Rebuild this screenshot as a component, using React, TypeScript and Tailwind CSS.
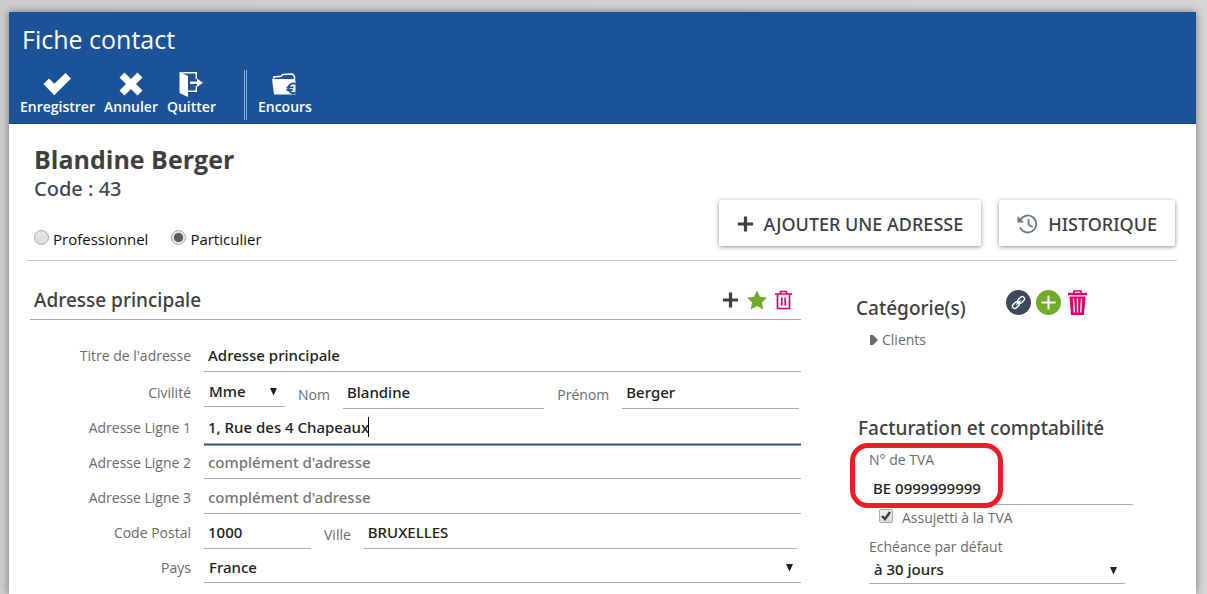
import type { ReactNode } from 'react';
import { clsx } from 'clsx';

const fieldClass = "w-full min-w-0 border-b border-[#a9a9a9] bg-transparent font-['Noto_Sans',sans-serif] text-[15px] font-medium text-[#212121] outline-none placeholder:text-[#757575] placeholder:opacity-100";
const inputClass = clsx(fieldClass, 'h-[35px] px-1 pt-0.5');
const headingClass = "font-['Noto_Sans',sans-serif] font-medium text-[#3f3f3f]";

function ToolButton({ label, children }: { label: string; children: ReactNode }) {
  return (
    <button type="button" className="flex flex-col items-center text-sm leading-5 font-semibold text-white">
      <span className="flex h-[27px] items-center">{children}</span>
      {label}
    </button>
  );
}

function Row({ label, id, className, children }: { label: string; id: string; className?: string; children: ReactNode }) {
  return (
    <div className="flex h-[35px] items-center gap-[13px]">
      <label htmlFor={id} className="w-[161px] shrink-0 pt-0.5 text-right text-sm text-[#6b6b6b]">{label}</label>
      <div className={clsx('flex min-w-0 flex-1 items-end gap-[13px]', className)}>{children}</div>
    </div>
  );
}

function InlineLabel({ id, children }: { id: string; children: ReactNode }) {
  return <label htmlFor={id} className="shrink-0 pb-1 text-sm leading-5 text-[#6b6b6b]">{children}</label>;
}

function Select({ id, value, className, compact }: { id: string; value: string; className?: string; compact?: boolean }) {
  return (
    <div className={clsx('relative self-start', className)}>
      <select id={id} className={clsx(fieldClass, 'block appearance-none pl-[5px]', compact ? 'h-[29px]' : 'h-[33px] pt-[3px]')} defaultValue={value}>
        <option>{value}</option>
      </select>
      <svg className="pointer-events-none absolute top-[3px] right-2 bottom-0 my-auto h-2 w-[7px]" viewBox="0 0 7 8" fill="#212121">
        <path d="M0 0h7L3.5 7.5z" />
      </svg>
    </div>
  );
}

function PlusIcon() {
  return (
    <svg width="17" height="18" viewBox="0 0 18 18" fill="none" stroke="#3f3f3f" strokeWidth="3.4">
      <path d="M9 1v16M1 9h16" />
    </svg>
  );
}

function Radio({ label, checked }: { label: string; checked?: boolean }) {
  return (
    <label className="flex items-center gap-1 text-[15px] leading-5 text-[#111]">
      <input
        type="radio"
        name="type"
        defaultChecked={checked}
        className="mb-1 size-[15px] appearance-none rounded-full border border-[#a8a8a8] bg-linear-to-b from-[#e6e6e6] to-[#dcdcdc] checked:bg-radial checked:from-[#5c5c5c] checked:from-45% checked:to-[#e6e6e6] checked:to-55%"
      />
      {label}
    </label>
  );
}

export default function App() {
  return (
    <div className="min-h-screen bg-linear-to-r from-[#cdcdcd] to-[#d6d6d6] pt-3 pr-[11px] pl-[9px] font-['Open_Sans',sans-serif]">
      <main className="min-h-[582px] bg-white shadow-[0_0_8px_rgba(0,0,0,0.45)]">
        <header className="border-b border-[#173f78] bg-[#1c5297] px-[11px] pt-[11px] pb-[3px] text-white">
          <h1 className="px-0.5 text-[25px] leading-8">Fiche contact</h1>
          <div className="mt-[15px] flex h-[50px] items-start">
            <div className="flex gap-[9px]">
              <ToolButton label="Enregistrer">
                <svg width="28" height="24" viewBox="0 0 28 24" fill="#fff"><path d="M.5 12 6 6.5l5.3 5.3L22.500 1 28 6.500 11.300 23.200z" /></svg>
              </ToolButton>
              <ToolButton label="Annuler">
                <svg width="24" height="24" viewBox="0 0 24 24" fill="#fff"><path d="M5.500.5 12 7 18.500.5 23.500 5.500 17 12l6.500 6.500-5 5L12 17l-6.500 6.500-5-5L7 12 .5 5.500z" /></svg>
              </ToolButton>
              <ToolButton label="Quitter">
                <svg width="24" height="26" viewBox="0 0 24 26" fill="#fff">
                  <path d="M.5 1h1L9 5v21L.5 22z" />
                  <path d="M1 1h17v7h-1.500V2.500H6zM9 19.500h7.500V15H18v6H9zM11 10.500h7V7.500l6 4.200-6 4.300v-3h-7z" />
                </svg>
              </ToolButton>
            </div>
            <div className="mr-[11px] ml-7 h-full w-[3px] border-x border-[#8fabd2]" />
            <ToolButton label="Encours">
              <svg width="25" height="22" viewBox="0 0 25 22">
                <path d="M1.800 5.500V4L9 3.300 10.500 1.500 20.500 1 22.500 3.500v4" fill="none" stroke="#fff" strokeWidth="1.500" />
                <path d="M0 6h21.500l2 2v13.500H2z" fill="#fff" />
                <path d="M23.800 11.200a4.800 4.800 0 1 0 0 8.200M14.500 14.300h7M14.500 17h6" fill="none" stroke="#1c5297" strokeWidth="1.800" />
              </svg>
            </ToolButton>
          </div>
        </header>

        <section className="mr-[19px] ml-[18px] flex items-end justify-between border-b border-[#c8c8c8] pt-[17px] pl-[7px]">
          <div>
            <h2 className="text-[25px] leading-9 font-bold text-[#3f3f3f]">Blandine Berger</h2>
            <p className="font-['Noto_Sans',sans-serif] text-xl leading-6 font-medium text-[#414a5a]">Code : 43</p>
            <div className="mt-7 flex gap-[23px] pb-[11px]">
              <Radio label="Professionnel" />
              <Radio label="Particulier" checked />
            </div>
          </div>
          <div className={clsx(headingClass, 'mr-0.5 mb-[14px] flex gap-[18px] text-lg')}>
            <button type="button" className="flex h-[46px] items-center gap-2.5 rounded-xs px-[18px] pt-0.5 shadow-[0_1px_4px_rgba(0,0,0,0.45)]">
              <PlusIcon />
              AJOUTER UNE ADRESSE
            </button>
            <button type="button" className="flex h-[46px] items-center gap-2.5 rounded-xs px-[18px] pt-0.5 shadow-[0_1px_4px_rgba(0,0,0,0.45)]">
              <svg width="21" height="20" viewBox="0 0 21 20" fill="none" stroke="#6b7787" strokeWidth="1.800">
                <path d="M3.500 5.500A8.500 8.500 0 1 1 3 13.500M11.500 5v5.500l4 2.500" />
                <path d="M.5 2v6.500H7z" fill="#6b7787" stroke="none" />
              </svg>
              HISTORIQUE
            </button>
          </div>
        </section>

        <div className="flex gap-[54px] pl-[21px]">
          <section className="min-w-0 flex-1">
            <div className="mt-6 flex h-[35px] items-start justify-between border-b border-[#a9a9a9] pr-[9px] pl-1">
              <h3 className={clsx(headingClass, 'text-[19px] leading-[30px]')}>Adresse principale</h3>
              <div className="flex h-[30px] items-center gap-2">
                <button type="button" aria-label="Ajouter"><PlusIcon /></button>
                <button type="button" aria-label="Adresse par défaut">
                  <svg width="20" height="20" viewBox="0 0 20 20" fill="#72ab2a"><path d="m10 .5 3 6.300 7 .9-5.100 4.700 1.400 7L10 16l-6.300 3.400 1.400-7L0 7.700l7-.9z" /></svg>
                </button>
                <button type="button" aria-label="Supprimer">
                  <svg width="17" height="20" viewBox="0 0 17 20" fill="none" stroke="#e0006a" strokeWidth="1.700">
                    <path d="M0 4h17M5.500 4V1.500h6V4M2.500 4v14.500h12V4M6.800 7.500v8M10.200 7.500v8" />
                  </svg>
                </button>
              </div>
            </div>

            <form className="mt-[17px]">
              <Row label="Titre de l'adresse" id="titre">
                <input id="titre" className={inputClass} defaultValue="Adresse principale" />
              </Row>
              <div className="h-0.5" />
              <Row label="Civilité" id="civilite" className="pr-0.5">
                <Select id="civilite" value="Mme" className="w-[81px] shrink-0" />
                <InlineLabel id="nom">Nom</InlineLabel>
                <input id="nom" className={clsx(inputClass, 'flex-[204]')} defaultValue="Blandine" />
                <InlineLabel id="prenom">Prénom</InlineLabel>
                <input id="prenom" className={clsx(inputClass, 'flex-[178]')} defaultValue="Berger" />
              </Row>
              <Row label="Adresse Ligne 1" id="ligne1">
                <div className="relative flex-1">
                  <input id="ligne1" className={clsx(inputClass, 'block border-[#1c5297] shadow-[0_1px_0_#1c5297,0_2px_0_#8aa7cf]')} defaultValue="1, Rue des 4 Chapeaux" />
                  <span className="absolute top-2 left-[164px] h-5 w-px bg-black" />
                </div>
              </Row>
              <Row label="Adresse Ligne 2" id="ligne2">
                <input id="ligne2" className={inputClass} placeholder="complément d'adresse" />
              </Row>
              <Row label="Adresse Ligne 3" id="ligne3">
                <input id="ligne3" className={inputClass} placeholder="complément d'adresse" />
              </Row>
              <Row label="Code Postal" id="cp" className="pr-1">
                <input id="cp" className={clsx(inputClass, 'max-w-[107px]')} defaultValue="1000" />
                <InlineLabel id="ville">Ville</InlineLabel>
                <input id="ville" className={clsx(inputClass, 'flex-1')} defaultValue="BRUXELLES" />
              </Row>
              <Row label="Pays" id="pays">
                <Select id="pays" value="France" className="flex-1" />
              </Row>
            </form>
          </section>

          <aside className="w-[341px] shrink-0">
            <div className="mt-[29px] flex items-start pl-px">
              <h3 className={clsx(headingClass, 'mt-1 w-[150px] text-[19px] leading-7')}>Catégorie(s)</h3>
              <div className="flex gap-[5px]">
                <button type="button" aria-label="Lier">
                  <svg width="25" height="25" viewBox="0 0 25 25" fill="none" stroke="#fff" strokeWidth="1.400">
                    <circle cx="12.500" cy="12.500" r="12.500" fill="#3d4a5c" stroke="none" />
                    <g transform="rotate(-45 12.500 12.500)">
                      <rect x="5" y="10.200" width="7.500" height="4.600" rx="2.300" />
                      <rect x="12.500" y="10.200" width="7.500" height="4.600" rx="2.300" />
                      <path d="M9.500 12.500h6" />
                    </g>
                  </svg>
                </button>
                <button type="button" aria-label="Ajouter une catégorie">
                  <svg width="25" height="25" viewBox="0 0 25 25" stroke="#fff" strokeWidth="2">
                    <circle cx="12.500" cy="12.500" r="12.500" fill="#72ab2a" stroke="none" />
                    <path d="M12.500 5.500v14M5.500 12.500h14" />
                  </svg>
                </button>
                <button type="button" aria-label="Supprimer la catégorie" className="ml-0.5">
                  <svg width="19" height="25" viewBox="0 0 19 25" fill="none" stroke="#e0006a">
                    <path d="M0 4h19" strokeWidth="2.400" />
                    <path d="M6 3.500V1h7v2.500" strokeWidth="1.600" />
                    <path d="M1.500 6.500h16L16 25H3z" fill="#e0006a" stroke="none" />
                    <path d="m5.500 8.500.8 14M9.500 8.500v14M13.500 8.500l-.8 14" stroke="#fff" strokeWidth="1.300" />
                  </svg>
                </button>
              </div>
            </div>
            <button type="button" className="mt-[3px] ml-[15px] flex h-[30px] items-center gap-1 text-sm text-[#6b6b6b]">
              <svg width="8" height="10" viewBox="0 0 8 10" fill="#6b6b6b"><path d="M0 0h3l5 5-5 5H0z" /></svg>
              Clients
            </button>

            <h3 className={clsx(headingClass, 'mt-[59px] ml-[3px] text-[19px] leading-7')}>Facturation et comptabilité</h3>
            <div className="relative ml-[14px] w-[264px] pt-2">
              <label htmlFor="tva" className="block text-sm leading-5 text-[#6b6b6b]">N° de TVA</label>
              <input id="tva" className={inputClass} defaultValue="BE 0999999999" />
              <div className="pointer-events-none absolute top-px -left-[19px] h-[65px] w-[153px] rounded-[18px] border-[5px] border-[#ee1c25]" />
            </div>
            <div className="mt-[3px] ml-6 flex items-center gap-[9px]">
              <span className="relative mb-1 size-[14px]">
                <input id="assujetti" type="checkbox" defaultChecked className="block size-[14px] appearance-none rounded-xs border border-[#a8a8a8] bg-linear-to-b from-[#eee] to-[#dcdcdc]" />
                <svg className="pointer-events-none absolute inset-0" width="14" height="14" viewBox="0 0 14 14" fill="none" stroke="#3c3c3c" strokeWidth="2.400">
                  <path d="m3 7 3 3.200L11 3" />
                </svg>
              </span>
              <label htmlFor="assujetti" className="text-sm leading-5 text-[#6b6b6b]">Assujetti à la TVA</label>
            </div>
            <label htmlFor="echeance" className="mt-[11px] ml-[14px] block text-sm leading-4 text-[#6b6b6b]">Echéance par défaut</label>
            <Select id="echeance" value="à 30 jours" className="mb-2 ml-[14px] w-[256px]" compact />
          </aside>
        </div>
      </main>
    </div>
  );
}
